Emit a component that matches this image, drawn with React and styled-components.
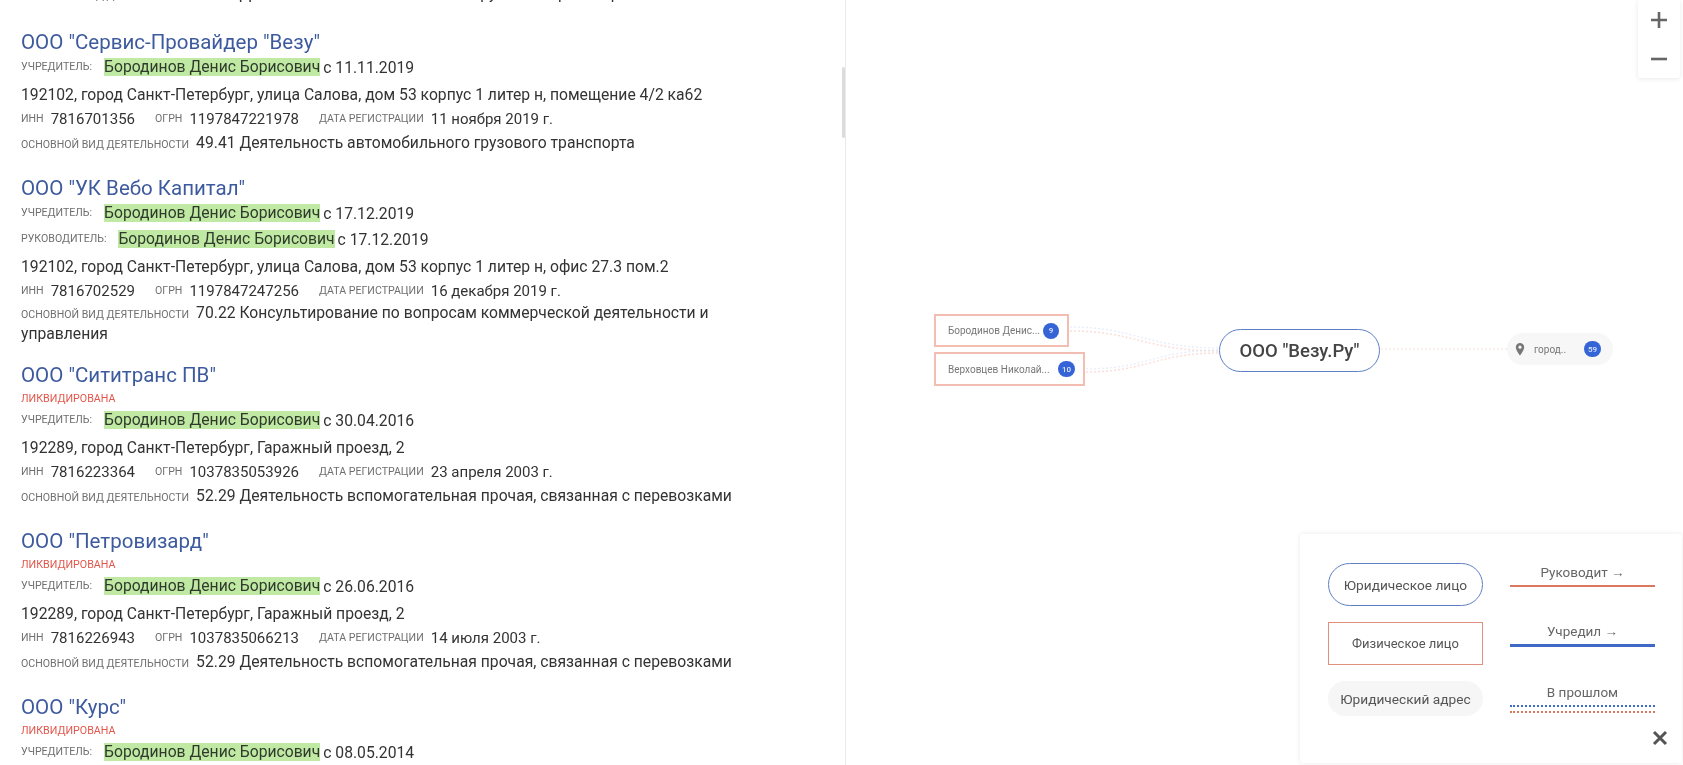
import React from 'react';
import styled, { createGlobalStyle } from 'styled-components';

const Global = createGlobalStyle`
  html, body { margin: 0; padding: 0; background: #fff; }
  body { font-family: Roboto, "Liberation Sans", sans-serif; color: #333; }
`;

const Page = styled.div`
  display: flex;
  width: 1683px;
  height: 765px;
  overflow: hidden;
  background: #fff;
  filter: blur(0.55px);
`;

const ResultsPanel = styled.section`
  position: relative;
  flex: 0 0 846px;
  height: 765px;
  overflow: hidden;
  border-right: 1px solid #e9e9e9;
  box-sizing: border-box;
`;

const ScrollThumb = styled.div`
  position: absolute;
  top: 67px;
  right: 0;
  width: 3px;
  height: 71px;
  border-radius: 2px;
  background: #dcdcdc;
`;

const List = styled.div`
  margin-top: -19px;
  padding-left: 21px;
  width: 725px;
`;

const Card = styled.article`
  margin-bottom: ${p => p.$gap ?? 22}px;
`;

const Title = styled.h3`
  margin: 0;
  font-size: 20.5px;
  line-height: 24px;
  font-weight: 400;
  color: #3d5a9e;
  white-space: nowrap;
`;

const Status = styled.div`
  height: 20px;
  line-height: 20px;
  margin: 2px 0 -2px;
  font-size: 10.7px;
  text-transform: uppercase;
  color: #e2574c;
`;

const OwnerRow = styled.div`
  display: flex;
  align-items: center;
  height: 26px;
  font-size: 15.7px;
  white-space: nowrap;
`;

const Label = styled.span`
  font-size: 10.6px;
  line-height: 1;
  text-transform: uppercase;
  color: #6f6f6f;
`;

const Name = styled.span`
  margin-left: 12px;
  line-height: 18px;
  background: #c0eaa4;
  color: #2f3a2c;
  white-space: nowrap;
`;

const Since = styled.span`
  margin-left: 3px;
`;

const Address = styled.div`
  height: 26px;
  padding-top: 2px;
  box-sizing: border-box;
  line-height: 26px;
  font-size: 15.7px;
  white-space: nowrap;
`;

const Details = styled.div`
  display: flex;
  align-items: center;
  height: 24px;
  padding-top: 2px;
  box-sizing: border-box;
  font-size: 15px;
  white-space: nowrap;
`;

const Value = styled.span`
  margin-left: 7px;
  margin-right: 20px;
`;

const Activity = styled.div`
  padding: 1.5px 0;
  margin-top: ${p => (p.$tight ? '-2px' : '0')};
  font-size: 15.7px;
  line-height: 21px;
`;

const ActivityValue = styled.span`
  margin-left: 7px;
`;

const Canvas = styled.section`
  position: relative;
  flex: 1;
  height: 765px;
  overflow: hidden;
`;

const Edges = styled.svg`
  position: absolute;
  inset: 0;
  width: 100%;
  height: 100%;
`;

const PersonNode = styled.div`
  position: absolute;
  left: ${p => p.$x}px;
  top: ${p => p.$y}px;
  width: ${p => p.$w}px;
  height: ${p => p.$h}px;
  box-sizing: border-box;
  display: flex;
  align-items: center;
  justify-content: space-between;
  padding: 0 8px 0 12px;
  border: 2px solid #f3bdb1;
  background: #fff;
  font-size: 10px;
  color: #777;
  white-space: nowrap;
`;

const CompanyNode = styled.div`
  position: absolute;
  left: 373px;
  top: 329px;
  width: 161px;
  height: 43px;
  box-sizing: border-box;
  display: flex;
  align-items: center;
  justify-content: center;
  border: 1.5px solid #5f7fc4;
  border-radius: 22px;
  background: #fff;
  font-size: 18.5px;
  font-weight: 500;
  color: #444;
`;

const AddressNode = styled.div`
  position: absolute;
  left: 661px;
  top: 333px;
  width: 106px;
  height: 32px;
  box-sizing: border-box;
  display: flex;
  align-items: center;
  padding: 0 12px 0 8px;
  border-radius: 16px;
  background: #f7f7f7;
  font-size: 10px;
  color: #777;
`;

const AddressText = styled.span`
  margin-left: 9px;
  flex: 1;
`;

const Badge = styled.span`
  display: inline-flex;
  align-items: center;
  justify-content: center;
  min-width: 16px;
  height: 16px;
  padding: ${p => (p.$wide ? '0 4px' : '0')};
  box-sizing: border-box;
  border-radius: 8px;
  background: #3564d6;
  color: #dfe8ff;
  font-size: 8px;
  font-weight: 500;
`;

const ZoomControl = styled.div`
  position: absolute;
  top: 0;
  right: 3px;
  width: 42px;
  height: 78px;
  display: flex;
  flex-direction: column;
  align-items: center;
  justify-content: space-around;
  background: #fff;
  border-radius: 0 0 3px 3px;
  box-shadow: 0 1px 5px rgba(0, 0, 0, 0.09);
  color: #666;
`;

const Legend = styled.aside`
  position: absolute;
  right: 1px;
  bottom: 2px;
  width: 382px;
  height: 229px;
  box-sizing: border-box;
  padding: 29px 14px 0 28px;
  background: #fff;
  border-radius: 3px;
  box-shadow: 0 0 5px rgba(0, 0, 0, 0.09);
`;

const LegendGrid = styled.div`
  display: grid;
  grid-template-columns: 155px 145px;
  grid-template-rows: 43px 43px 35px;
  column-gap: 27px;
  row-gap: 16px;
`;

const LegendEntity = styled.div`
  display: flex;
  align-items: center;
  justify-content: center;
  box-sizing: border-box;
  font-size: 13.7px;
  color: #555;
  ${p => p.$kind === 'legal' && 'border: 1.5px solid #5f7fc4; border-radius: 22px;'}
  ${p => p.$kind === 'person' && 'border: 1.5px solid #e08f7e; font-size: 13px;'}
  ${p => p.$kind === 'address' && 'background: #f6f6f6; border-radius: 18px;'}
`;

const LegendLink = styled.div`
  display: flex;
  flex-direction: column;
  align-items: stretch;
  padding-top: ${p => p.$offset || 0}px;
`;

const LinkCaption = styled.div`
  height: 21px;
  line-height: 19px;
  margin-bottom: 1px;
  text-align: center;
  font-size: 13.5px;
  color: #666;
`;

const Line = styled.div`
  height: 0;
  border-top: ${p => p.$weight}px ${p => p.$style || 'solid'} ${p => p.$color};
  margin-bottom: ${p => p.$gap || 0}px;
`;

const LegendFooter = styled.div`
  display: flex;
  justify-content: flex-end;
  margin-top: 14px;
  color: #555;
`;

const Owner = ({ role, since }) => (
  <OwnerRow>
    <Label>{role}:</Label>
    <Name>Бородинов Денис Борисович</Name>
    <Since>с {since}</Since>
  </OwnerRow>
);

const Activ = ({ children, tight }) => (
  <Activity $tight={tight}>
    <Label>Основной вид деятельности</Label>
    <ActivityValue>{children}</ActivityValue>
  </Activity>
);

const Det = ({ inn, ogrn, date }) => (
  <Details>
    <Label>ИНН</Label><Value>{inn}</Value>
    <Label>ОГРН</Label><Value>{ogrn}</Value>
    <Label>Дата регистрации</Label><Value>{date}</Value>
  </Details>
);

const Cross = ({ size, sw }) => (
  <svg width={size} height={size} viewBox="0 0 16 16" fill="none" stroke="currentColor" strokeWidth={sw} strokeLinecap="butt">
    <path d="M2 2 L14 14 M14 2 L2 14" />
  </svg>
);

export default function App() {
  return (
    <>
      <Global />
      <Page>
        <ResultsPanel>
          <List>
            <Card $gap={25}>
              <Activ>49.41 Деятельность автомобильного грузового транспорта</Activ>
            </Card>
            <Card>
              <Title>ООО "Сервис-Провайдер "Везу"</Title>
              <Owner role="Учредитель" since="11.11.2019" />
              <Address>192102, город Санкт-Петербург, улица Салова, дом 53 корпус 1 литер н, помещение 4/2 ка62</Address>
              <Det inn="7816701356" ogrn="1197847221978" date="11 ноября 2019 г." />
              <Activ>49.41 Деятельность автомобильного грузового транспорта</Activ>
            </Card>
            <Card $gap={18}>
              <Title>ООО "УК Вебо Капитал"</Title>
              <Owner role="Учредитель" since="17.12.2019" />
              <Owner role="Руководитель" since="17.12.2019" />
              <Address>192102, город Санкт-Петербург, улица Салова, дом 53 корпус 1 литер н, офис 27.3 пом.2</Address>
              <Det inn="7816702529" ogrn="1197847247256" date="16 декабря 2019 г." />
              <Activ tight>70.22 Консультирование по вопросам коммерческой деятельности и управления</Activ>
            </Card>
            <Card>
              <Title>ООО "Сититранс ПВ"</Title>
              <Status>Ликвидирована</Status>
              <Owner role="Учредитель" since="30.04.2016" />
              <Address>192289, город Санкт-Петербург, Гаражный проезд, 2</Address>
              <Det inn="7816223364" ogrn="1037835053926" date="23 апреля 2003 г." />
              <Activ>52.29 Деятельность вспомогательная прочая, связанная с перевозками</Activ>
            </Card>
            <Card>
              <Title>ООО "Петровизард"</Title>
              <Status>Ликвидирована</Status>
              <Owner role="Учредитель" since="26.06.2016" />
              <Address>192289, город Санкт-Петербург, Гаражный проезд, 2</Address>
              <Det inn="7816226943" ogrn="1037835066213" date="14 июля 2003 г." />
              <Activ>52.29 Деятельность вспомогательная прочая, связанная с перевозками</Activ>
            </Card>
            <Card>
              <Title>ООО "Курс"</Title>
              <Status>Ликвидирована</Status>
              <Owner role="Учредитель" since="08.05.2014" />
            </Card>
          </List>
          <ScrollThumb />
        </ResultsPanel>
        <Canvas>
          <Edges viewBox="0 0 837 765">
            <g fill="none" strokeWidth="1.5" strokeDasharray="2 2">
              <path d="M224 327 C290 327 300 348 374 348" stroke="#d5dff6" opacity=".5" />
              <path d="M224 331 C290 331 300 351 374 351" stroke="#f6c9bf" opacity=".6" />
              <path d="M240 369 C300 369 310 350 374 350" stroke="#d5dff6" opacity=".5" />
              <path d="M240 372 C300 372 310 353 374 353" stroke="#f6c9bf" opacity=".6" />
              <path d="M535 349 L661 349" stroke="#f6d8d2" opacity=".5" />
            </g>
          </Edges>
          <PersonNode $x={88} $y={314} $w={135} $h={33}>
            Бородинов Денис...
            <Badge>9</Badge>
          </PersonNode>
          <PersonNode $x={88} $y={352} $w={151} $h={34}>
            Верховцев Николай...
            <Badge $wide>10</Badge>
          </PersonNode>
          <CompanyNode>ООО "Везу.Ру"</CompanyNode>
          <AddressNode>
            <svg width="10" height="13" viewBox="0 0 10 13" fill="#777">
              <path fillRule="evenodd" d="M5 0a4.2 4.2 0 0 0-4.2 4.2C.8 7.2 5 12.5 5 12.5s4.2-5.3 4.2-8.3A4.2 4.2 0 0 0 5 0zm0 5.8a1.6 1.6 0 1 1 0-3.2 1.6 1.6 0 0 1 0 3.2z" />
            </svg>
            <AddressText>город..</AddressText>
            <Badge $wide>59</Badge>
          </AddressNode>
          <ZoomControl>
            <svg width="18" height="18" viewBox="0 0 18 18" fill="none" stroke="currentColor" strokeWidth="2.6">
              <path d="M1 9 H17 M9 1 V17" />
            </svg>
            <svg width="18" height="18" viewBox="0 0 18 18" fill="none" stroke="currentColor" strokeWidth="2.6">
              <path d="M1 9 H17" />
            </svg>
          </ZoomControl>
          <Legend>
            <LegendGrid>
              <LegendEntity $kind="legal">Юридическое лицо</LegendEntity>
              <LegendLink>
                <LinkCaption>Руководит →</LinkCaption>
                <Line $weight={2} $color="#d9775f" />
              </LegendLink>
              <LegendEntity $kind="person">Физическое лицо</LegendEntity>
              <LegendLink>
                <LinkCaption>Учредил →</LinkCaption>
                <Line $weight={3} $color="#4069c6" />
              </LegendLink>
              <LegendEntity $kind="address">Юридический адрес</LegendEntity>
              <LegendLink $offset={2}>
                <LinkCaption>В прошлом</LinkCaption>
                <Line $weight={2} $style="dotted" $color="#4069c6" $gap={4} />
                <Line $weight={2} $style="dotted" $color="#d9775f" />
              </LegendLink>
            </LegendGrid>
            <LegendFooter>
              <Cross size={16} sw={3} />
            </LegendFooter>
          </Legend>
        </Canvas>
      </Page>
    </>
  );
}
